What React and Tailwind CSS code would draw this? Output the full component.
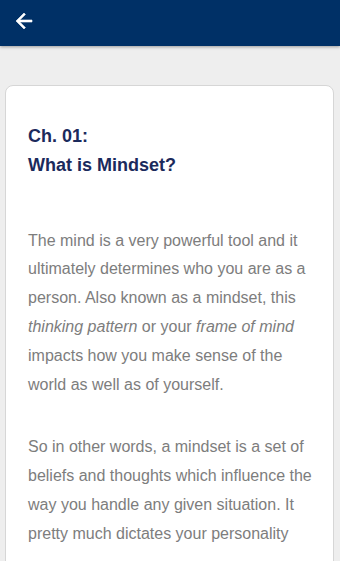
export default function App() {
  return (
    <div className="w-[340px] h-[561px] overflow-hidden bg-[#eeeeee] font-['Liberation_Sans',Arial,sans-serif]">
      {/* top bar */}
      <div className="h-[46px] bg-[#003066] flex items-center pl-[12px] shadow-[0_1px_3px_rgba(0,0,0,0.35)] relative">
        <svg width="24" height="24" viewBox="0 0 24 24" className="-mt-[4px]">
          <path
            d="M20 11H7.83l5.59-5.59L12 4l-8 8 8 8 1.41-1.41L7.83 13H20v-2z"
            fill="#ffffff"
            stroke="#ffffff"
            strokeWidth="0.6"
          />
        </svg>
      </div>

      {/* chapter card */}
      <div className="mt-[39px] ml-[5px] mr-[6px] bg-white border border-[#d6d6d6] rounded-[8px] pl-[22px] pr-[18px] pt-[36px] pb-10 min-h-[600px]">
        <h1 className="text-[18px] leading-[28.8px] font-bold text-[#1b2a5c]">
          Ch. 01:
          <br />
          What is Mindset?
        </h1>

        <p className="mt-[47px] text-[16px] leading-[28.8px] text-[#7d7d7d]">
          The mind is a very powerful tool and it ultimately determines who you
          are as a person. Also known as a mindset, this <i>thinking pattern</i>{" "}
          or your <i>frame of mind</i> impacts how you make sense of the world as
          well as of yourself.
        </p>

        <p className="mt-[34px] text-[16px] leading-[28.8px] text-[#7d7d7d]">
          So in other words, a mindset is a set of beliefs and thoughts which
          influence the way you handle any given situation. It pretty much
          dictates your personality
        </p>
      </div>
    </div>
  );
}
